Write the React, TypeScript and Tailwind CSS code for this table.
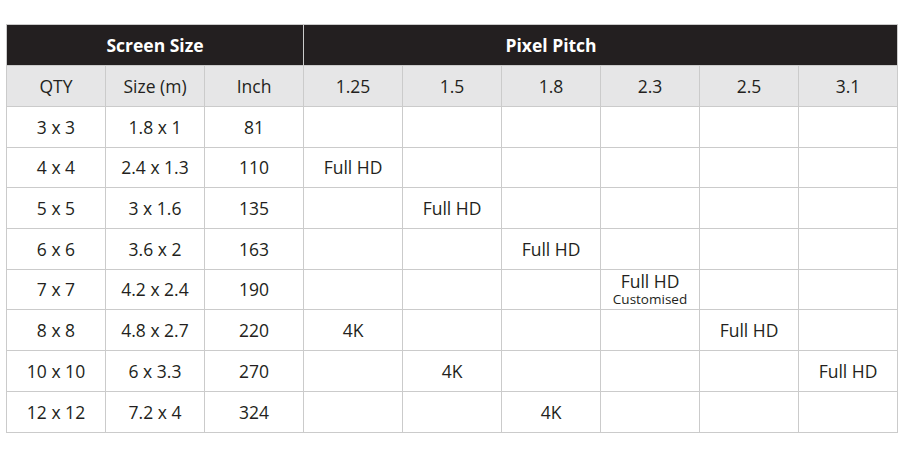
import React from "react";

const pitches = ["1.25", "1.5", "1.8", "2.3", "2.5", "3.1"];

type Row = { qty: string; size: string; inch: string; cells: Record<number, React.ReactNode> };

const rows: Row[] = [
  { qty: "3 x 3", size: "1.8 x 1", inch: "81", cells: {} },
  { qty: "4 x 4", size: "2.4 x 1.3", inch: "110", cells: { 0: "Full HD" } },
  { qty: "5 x 5", size: "3 x 1.6", inch: "135", cells: { 1: "Full HD" } },
  { qty: "6 x 6", size: "3.6 x 2", inch: "163", cells: { 2: "Full HD" } },
  {
    qty: "7 x 7",
    size: "4.2 x 2.4",
    inch: "190",
    cells: {
      3: (
        <div className="flex flex-col items-center">
          <span className="leading-[19px]">Full HD</span>
          <span className="text-[13.5px] leading-[17px]">Customised</span>
        </div>
      ),
    },
  },
  { qty: "8 x 8", size: "4.8 x 2.7", inch: "220", cells: { 0: "4K", 4: "Full HD" } },
  { qty: "10 x 10", size: "6 x 3.3", inch: "270", cells: { 1: "4K", 5: "Full HD" } },
  { qty: "12 x 12", size: "7.2 x 4", inch: "324", cells: { 2: "4K" } },
];

const cell = "border-[1.5px] border-[#cbcbcb] text-center align-middle p-0";

export default function App() {
  return (
    <div className="w-[900px] h-[456px] bg-white pt-[24px] pl-[6px] font-['Open_Sans',sans-serif] text-[#231f20]">
      <table className="table-fixed border-collapse w-[891px] text-[17.5px]">
        <colgroup>
          {Array.from({ length: 9 }).map((_, i) => (
            <col key={i} className="w-[99px]" />
          ))}
        </colgroup>
        <thead>
          <tr className="h-[41px] bg-[#231f20] text-white font-bold">
            <th colSpan={3} className={cell}>
              Screen Size
            </th>
            <th colSpan={6} className={`${cell} pr-[99px]`}>
              Pixel Pitch
            </th>
          </tr>
          <tr className="h-[41px] bg-[#e6e6e7]">
            <th className={`${cell} font-normal`}>QTY</th>
            <th className={`${cell} font-normal`}>Size (m)</th>
            <th className={`${cell} font-normal`}>Inch</th>
            {pitches.map((p) => (
              <th key={p} className={`${cell} font-normal`}>
                {p}
              </th>
            ))}
          </tr>
        </thead>
        <tbody>
          {rows.map((r) => (
            <tr key={r.qty} className="h-[40.7px]">
              <td className={cell}>{r.qty}</td>
              <td className={cell}>{r.size}</td>
              <td className={cell}>{r.inch}</td>
              {pitches.map((p, i) => (
                <td key={p} className={cell}>
                  {r.cells[i] ?? ""}
                </td>
              ))}
            </tr>
          ))}
        </tbody>
      </table>
    </div>
  );
}
